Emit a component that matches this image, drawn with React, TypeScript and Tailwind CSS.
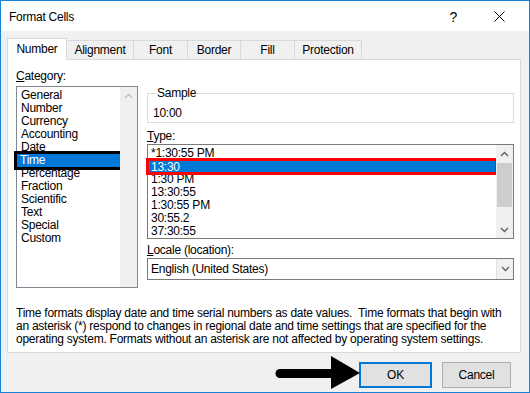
import React from 'react';

const font = { fontFamily: '"Liberation Sans", Arial, sans-serif' };

const categories = ['General', 'Number', 'Currency', 'Accounting', 'Date', 'Time', 'Percentage', 'Fraction', 'Scientific', 'Text', 'Special', 'Custom'];
const types = ['*1:30:55 PM', '13:30', '1:30 PM', '13:30:55', '1:30:55 PM', '30:55.2', '37:30:55'];
const tabs = [
    { label: 'Number', w: 'w-[60px]' },
    { label: 'Alignment', w: 'w-[67px]' },
    { label: 'Font', w: 'w-[54px]' },
    { label: 'Border', w: 'w-[53px]' },
    { label: 'Fill', w: 'w-[54px]' },
    { label: 'Protection', w: 'w-[67px]' },
];

const ChevronUp: React.FC<{ color?: string }> = ({ color = '#606060' }) => (
    <svg width="9" height="6" viewBox="0 0 9 6">
        <path d="M1 5 L4.5 1.5 L8 5" fill="none" stroke={color} strokeWidth="1.4" />
    </svg>
);

const ChevronDown: React.FC<{ color?: string }> = ({ color = '#606060' }) => (
    <svg width="9" height="6" viewBox="0 0 9 6">
        <path d="M1 1 L4.5 4.5 L8 1" fill="none" stroke={color} strokeWidth="1.4" />
    </svg>
);

const App: React.FC = () => {
    return (
        <div className="relative w-[530px] h-[393px] border border-[#1883d7] bg-[#f0f0f0] text-[12px] tracking-[-0.25px] text-black flex flex-col overflow-hidden" style={font}>
            {/* title bar */}
            <div className="h-[30px] bg-white flex items-center pl-[8px] pr-[24px] pt-[1px] shrink-0">
                <span className="text-[12px] leading-none">Format Cells</span>
                <span className="ml-auto text-[14px] leading-none mr-[37px]">?</span>
                <svg width="11" height="11" viewBox="0 0 11 11">
                    <path d="M0.5 0.5 L10.5 10.5 M10.5 0.5 L0.5 10.5" stroke="#000" strokeWidth="1" />
                </svg>
            </div>

            {/* tabs */}
            <div className="flex items-end pl-[6px] mt-[7px] h-[21px]">
                {tabs.map((t, i) =>
                    i === 0 ? (
                        <div key={t.label} className={`${t.w} h-[22px] -mb-[1px] z-10 bg-white border border-b-0 border-[#d9d9d9] flex items-center justify-center pb-[2px]`}>
                            {t.label}
                        </div>
                    ) : (
                        <div key={t.label} className={`${t.w} h-[19px] bg-[#f0f0f0] border-t border-r border-[#d9d9d9] flex items-center justify-center`}>
                            {t.label}
                        </div>
                    )
                )}
            </div>

            {/* panel */}
            <div className="ml-[6px] w-[514px] h-[294px] bg-white border border-[#d9d9d9] pl-[8px] pt-[10px] flex flex-col leading-[13px]">
                <div className="flex gap-[9px]">
                    {/* category */}
                    <div className="w-[122px] flex flex-col">
                        <div className="h-[13px]"><span className="underline">C</span>ategory:</div>
                        <div className="mt-[3px] h-[202px] border border-[#828790] flex">
                            <div className="flex-1 pt-[2px]">
                                {categories.map((c) =>
                                    c === 'Time' ? (
                                        <div key={c} className="h-[13px] pl-[3px] bg-[#0078d7] text-white outline-[3px] outline-black outline-solid">
                                            {c}
                                        </div>
                                    ) : (
                                        <div key={c} className="h-[13px] pl-[4px]">
                                            {c}
                                        </div>
                                    )
                                )}
                            </div>
                            <div className="w-[17px] bg-[#f0f0f0] flex justify-center pt-[6px]">
                                <ChevronUp color="#bfbfbf" />
                            </div>
                        </div>
                    </div>

                    {/* right column */}
                    <div className="w-[367px] flex flex-col">
                        <fieldset className="mt-[17px] border border-[#dcdcdc] pl-[4px] pt-[7px] pb-[2px]">
                            <legend className="ml-[4px] px-[1px] leading-[13px]">Sample</legend>
                            <div className="h-[13px] pl-[1px]">10:00</div>
                        </fieldset>

                        <div className="mt-[7px] h-[13px]"><span className="underline">T</span>ype:</div>
                        <div className="mt-[1px] h-[95px] border border-[#7a7a7a] flex">
                            <div className="flex-1 pt-[2px]">
                                {types.map((t) =>
                                    t === '13:30' ? (
                                        <div key={t} className="h-[13px] pl-[2px] bg-[#0078d7] text-white border border-dotted border-[#8cc4f0] outline-[3px] outline-offset-[-1px] outline-[#ff0000] outline-solid">
                                            {t}
                                        </div>
                                    ) : (
                                        <div key={t} className="h-[13px] pl-[3px]">
                                            {t}
                                        </div>
                                    )
                                )}
                            </div>
                            <div className="w-[17px] bg-[#f0f0f0] flex flex-col items-center">
                                <div className="h-[17px] flex items-center justify-center">
                                    <ChevronUp />
                                </div>
                                <div className="w-[15px] h-[44px] bg-[#cdcdcd] mt-[1px]" />
                                <div className="mt-auto h-[17px] flex items-center justify-center">
                                    <ChevronDown />
                                </div>
                            </div>
                        </div>

                        <div className="mt-[5px] h-[13px]"><span className="underline">L</span>ocale (location):</div>
                        <div className="mt-[1px] h-[22px] border border-[#7a7a7a] flex items-stretch">
                            <div className="flex-1 pl-[3px] flex items-center">English (United States)</div>
                            <div className="w-[17px] bg-[#f0f0f0] border-l border-[#e0e0e0] flex items-center justify-center">
                                <ChevronDown />
                            </div>
                        </div>
                    </div>
                </div>

                <div className="mt-[19px] whitespace-nowrap">
                    <div>Time formats display date and time serial numbers as date values.&nbsp; Time formats that begin with</div>
                    <div>an asterisk (*) respond to changes in regional date and time settings that are specified for the</div>
                    <div>operating system. Formats without an asterisk are not affected by operating system settings.</div>
                </div>
            </div>

            {/* buttons */}
            <div className="flex justify-end gap-[10px] pr-[18px] mt-[9px]">
                <button className="w-[73px] h-[26px] bg-[#e1e1e1] border-2 border-[#0078d7]">OK</button>
                <button className="w-[69px] h-[26px] bg-[#e1e1e1] border border-[#adadad]">Cancel</button>
            </div>

            {/* annotation arrow */}
            <svg className="absolute left-0 top-0 pointer-events-none" width="530" height="393" viewBox="0 0 530 393">
                <path d="M279 368 L334 368 L334 377 L279 377 A4.5 4.5 0 0 1 279 368 Z" fill="#000" />
                <path d="M330 355 L359 372 L330 388 Z" fill="#000" />
            </svg>
        </div>
    );
};

export default App;
